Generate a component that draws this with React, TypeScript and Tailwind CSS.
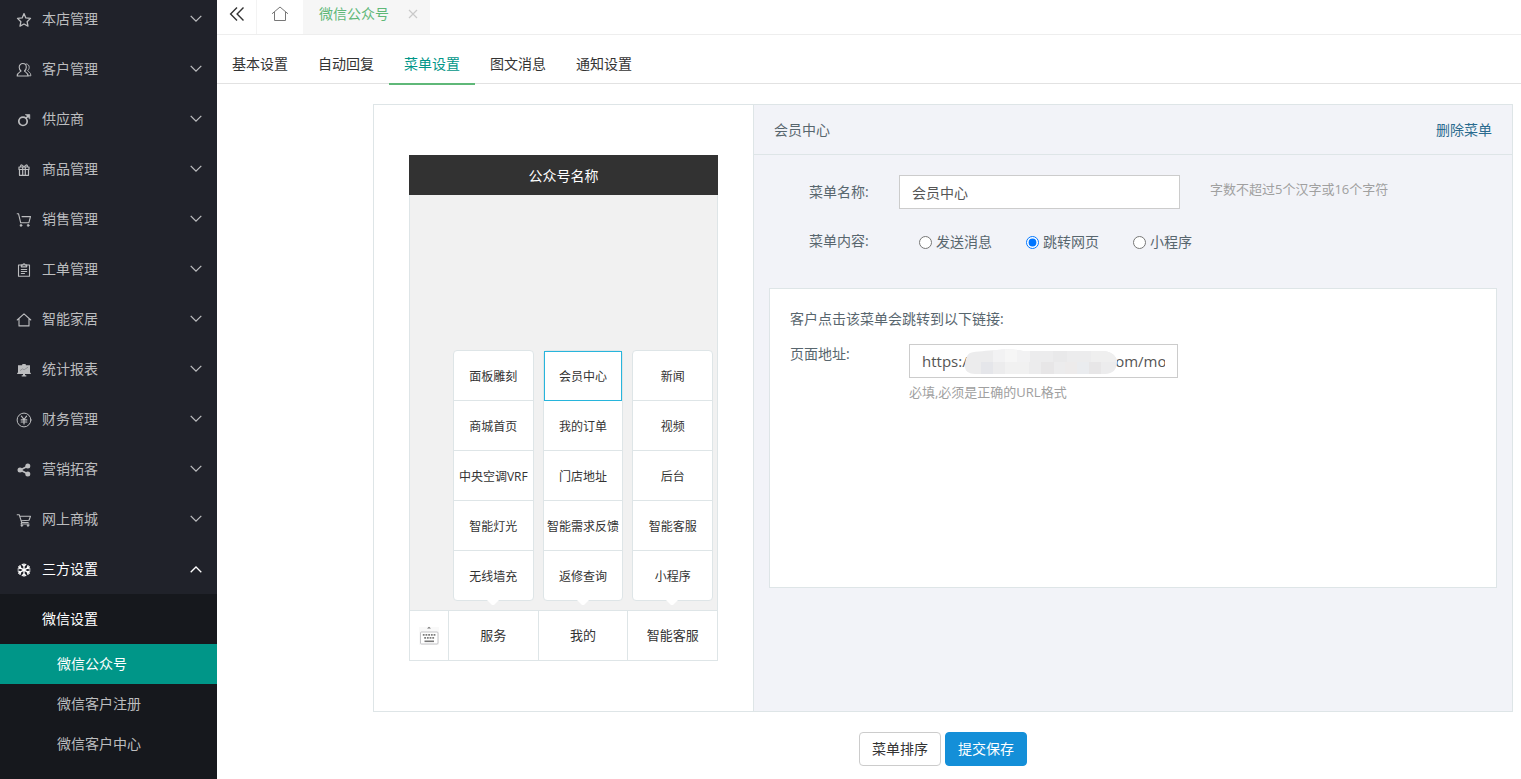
import { useState, type ReactNode } from "react";

/* ---------- icons (16 x 16 grid) ---------- */

function Icon({ children }: { children: ReactNode }) {
  return (
    <svg
      viewBox="0 0 16 16"
      className="mt-px h-4 w-4 shrink-0"
      fill="none"
      stroke="currentColor"
      strokeWidth="1.1"
      strokeLinecap="round"
      strokeLinejoin="round"
      aria-hidden="true"
    >
      {children}
    </svg>
  );
}

const StarIcon = () => (
  <Icon>
    <path strokeWidth="1.3" d="M8 1.600 9.800 5.900l4.700.5-3.400 3.300.9 4.400L8 12l-4 2.100.9-4.400L1.500 6.400l4.700-.5z" />
  </Icon>
);

const UsersIcon = () => (
  <Icon>
    <path d="M6.800 1.500c2.100 0 3.500 1.600 3.500 3.700 0 1.700-.8 2.900-1.800 3.800.4 1 3.500 1.300 3.500 5H1.200c0-3.700 3.400-4 3.800-5-1-.9-1.800-2.100-1.800-3.800 0-2.100 1.500-3.700 3.600-3.700z" />
    <path strokeWidth=".9" d="M10.300 1.900c1.900.2 2.900 1.600 2.900 3.400 0 1.500-.7 2.600-1.500 3.300.4 1.300 3.200 1.600 3.200 5.200h-2.600" />
  </Icon>
);

const MaleIcon = () => (
  <Icon>
    <circle cx="7" cy="9.300" r="4.200" strokeWidth="1.700" />
    <path strokeWidth="1.500" d="m10 6.200 2.600-2.700" />
    <path d="M9.600 2.500h4.200v4.200z" fill="currentColor" strokeWidth=".6" />
  </Icon>
);

const GiftIcon = () => (
  <Icon>
    <path
      strokeWidth="1.200"
      d="M3 5h10v2.500H3zM3.500 7.500h9v5.800h-9zM6.700 5v8.300M9.300 5v8.300M7.500 4.700C6.500 2.400 4.300 2.500 4.700 4.400M8.500 4.700c1-2.300 3.200-2.200 2.800-.3"
    />
  </Icon>
);

const CartIcon = () => (
  <Icon>
    <path d="M1.200 1.700h1.300l2.200 9.100h8.100l1.700-6.200H6" />
    <circle cx="5" cy="13.400" r="1.100" fill="currentColor" strokeWidth=".4" />
    <circle cx="12.200" cy="13.400" r="1.100" fill="currentColor" strokeWidth=".4" />
  </Icon>
);

const ClipboardIcon = () => (
  <Icon>
    <path d="M5 3H2.500v11.200h11V3H11" />
    <path strokeWidth="1.300" d="M5.400 4.800V3H7c0-1.600 2-1.600 2 0h1.600v1.800z" />
    <path d="M5.300 7.500h5.400M5.300 9.500h5.400M5.300 11.500h3.200" />
  </Icon>
);

const HouseIcon = () => (
  <Icon>
    <path d="M1.200 8 8 1.900 14.800 8M3 6.800v7.100h10V6.800" />
  </Icon>
);

const BoardIcon = () => (
  <Icon>
    <path
      fill="currentColor"
      stroke="none"
      d="M6.500 2h3l.5 1.200h4v7.600h.8v1.200H9v1.200h1.300v1.200H5.700v-1.200H7V12H1.200v-1.200H2V3.200h4z"
    />
    <path className="stroke-[#85878c]" strokeWidth=".8" d="m4.400 8.400 2-1.500 1.800.8 3.500-2.300" />
  </Icon>
);

const YenIcon = () => (
  <Icon>
    <circle cx="8" cy="8" r="6.900" strokeWidth="1" />
    <path strokeWidth="1.200" d="M5.400 4.200 8 7.500l2.600-3.300M8 7.500v4.500M5.200 7.900h5.600M5.200 10h5.600" />
  </Icon>
);

const ShareIcon = () => (
  <Icon>
    <path strokeWidth="1.500" d="M12 4 4.300 8l7.700 4" />
    <g fill="currentColor" stroke="none">
      <circle cx="4" cy="8" r="2.500" />
      <circle cx="11.800" cy="4.100" r="2.500" />
      <circle cx="11.800" cy="11.900" r="2.500" />
    </g>
  </Icon>
);

const StoreCartIcon = () => (
  <Icon>
    <path d="M1.200 2.700h2l2.500 7.800h6.500M3.700 4.200h10.800l-1.500 4-7.600.5M5.700 10.500l-.6 1.500h8" />
    <circle cx="5.800" cy="13.500" r="1" fill="currentColor" strokeWidth=".4" />
    <circle cx="12" cy="13.500" r="1" fill="currentColor" strokeWidth=".4" />
  </Icon>
);

const SnowIcon = () => (
  <Icon>
    <path
      strokeWidth="1.300"
      d="M8 1.800v12.400M2.600 4.900l10.800 6.200M2.600 11.100l10.800-6.200M6.200 2.400 8 4.200l1.800-1.800M6.200 13.600 8 11.800l1.800 1.800M2.100 7l2.500-.8L4 3.600M13.900 7l-2.500-.8.600-2.600M2.100 9l2.500.8-.6 2.600M13.900 9l-2.500.8.600 2.600"
    />
  </Icon>
);

function Chevron({ up = false }: { up?: boolean }) {
  return (
    <svg
      viewBox="0 0 14 14"
      className="h-3.5 w-3.5 shrink-0"
      fill="none"
      stroke="currentColor"
      strokeWidth="1.300"
      aria-hidden="true"
    >
      <path d={up ? "m1.700 10.300 5.300-5.300 5.300 5.300" : "m1.700 3.900 5.300 5.200 5.300-5.200"} />
    </svg>
  );
}

function KeyboardIcon() {
  return (
    <svg viewBox="0 0 20 20" className="h-5 w-5" aria-hidden="true">
      <path d="M0 1h20v18H0z" fill="#f9f9f9" />
      <path d="m8 2.500 2-1.800 2 1.800z" fill="#777" />
      <rect x="1.500" y="6" width="17.500" height="12" rx="1" fill="#fff" stroke="#c3c3c6" />
      <g stroke="#7d7d7d" strokeWidth="1.900" strokeDasharray="1.800 .9">
        <path d="M3.800 8.900h13.300M5.200 11.900h10.300" />
      </g>
      <path d="M5.500 15.300h9.500" stroke="#777" strokeWidth="1.600" />
    </svg>
  );
}

/* ---------- sidebar ---------- */

const NAV = [
  { label: "本店管理", icon: <StarIcon /> },
  { label: "客户管理", icon: <UsersIcon /> },
  { label: "供应商", icon: <MaleIcon /> },
  { label: "商品管理", icon: <GiftIcon /> },
  { label: "销售管理", icon: <CartIcon /> },
  { label: "工单管理", icon: <ClipboardIcon /> },
  { label: "智能家居", icon: <HouseIcon /> },
  { label: "统计报表", icon: <BoardIcon /> },
  { label: "财务管理", icon: <YenIcon /> },
  { label: "营销拓客", icon: <ShareIcon /> },
  { label: "网上商城", icon: <StoreCartIcon /> },
  { label: "三方设置", icon: <SnowIcon />, open: true },
];

const SUB_NAV = ["微信公众号", "微信客户注册", "微信客户中心"];

function Sidebar() {
  return (
    <aside className="flex w-[217px] shrink-0 flex-col overflow-hidden bg-[#20222a] text-[#bcbdbf]">
      <nav className="-mt-1.5 flex flex-1 flex-col">
        {NAV.map((item) => (
          <button
            key={item.label}
            type="button"
            aria-expanded={!!item.open}
            className={`flex h-[50px] shrink-0 items-center pr-3.5 pl-4 ${item.open ? "text-white" : ""}`}
          >
            {item.icon}
            <span className="ml-2.5 flex-1 text-left">{item.label}</span>
            <Chevron up={item.open} />
          </button>
        ))}
        <div className="flex-1 bg-[#16181d]">
          <a href="#wechat" className="flex h-[50px] items-center pl-[42px] text-white">
            微信设置
          </a>
          {SUB_NAV.map((label, i) => (
            <a
              key={label}
              href="#wechat-page"
              className={`flex h-10 items-center pl-[57px] ${i === 0 ? "bg-[#009688] text-white" : ""}`}
            >
              {label}
            </a>
          ))}
        </div>
      </nav>
    </aside>
  );
}

/* ---------- top bars ---------- */

function TopBar() {
  return (
    <header className="flex h-[35px] border-b border-[#eeeeee] text-[#333333]">
      <button type="button" aria-label="收起" className="flex w-10 items-center justify-center border-r border-[#f3f3f3] pb-1.5">
        <svg viewBox="0 0 16 16" className="h-4 w-4" fill="none" stroke="currentColor" strokeWidth="1.400" aria-hidden="true">
          <path d="M8 1.500 1.600 8 8 14.500M14.500 1.500 8.100 8l6.400 6.500" />
        </svg>
      </button>
      <button type="button" aria-label="首页" className="flex w-[46px] items-center justify-center pb-1.5 text-[#777777]">
        <svg viewBox="0 0 18 18" className="h-[18px] w-[18px]" fill="none" stroke="currentColor" aria-hidden="true">
          <path d="M1 8.800 9 2l8 6.800M3.500 7v8.500h11V7" />
        </svg>
      </button>
      <div className="flex items-center bg-[#f6f6f6] pr-3 pb-1.5 pl-4 text-[#5fb878]">
        <a href="#wechat-page">微信公众号</a>
        <button type="button" aria-label="关闭" className="ml-[19px] text-[#c9c9c9]">
          <svg viewBox="0 0 10 10" className="h-2.5 w-2.5" fill="none" stroke="currentColor" strokeWidth="1.200" aria-hidden="true">
            <path d="m1 1 8 8M9 1 1 9" />
          </svg>
        </button>
      </div>
    </header>
  );
}

const TABS = ["基本设置", "自动回复", "菜单设置", "图文消息", "通知设置"];

function Tabs() {
  return (
    <nav className="flex h-[49px] items-end border-b border-[#e2e2e2] text-[#333333]">
      {TABS.map((tab) => (
        <a
          key={tab}
          href="#tab"
          className={`-mb-0.5 flex h-10 items-center border-b-2 px-[15px] ${
            tab === "菜单设置" ? "border-[#5fb878] text-[#009688]" : "border-transparent"
          }`}
        >
          {tab}
        </a>
      ))}
    </nav>
  );
}

/* ---------- phone preview ---------- */

const COLUMNS = [
  { title: "服务", items: ["面板雕刻", "商城首页", "中央空调VRF", "智能灯光", "无线墙充"] },
  { title: "我的", items: ["会员中心", "我的订单", "门店地址", "智能需求反馈", "返修查询"] },
  { title: "智能客服", items: ["新闻", "视频", "后台", "智能客服", "小程序"] },
];

function Phone() {
  return (
    <div className="text-[#333333]">
      <h2 className="flex h-10 items-center justify-center bg-[#323232] pt-0.5 text-white">公众号名称</h2>
      <div className="border-x border-b border-[#dee5e7]">
        <div className="flex h-[415px] items-end bg-[#f1f1f1] pb-[9px] pl-[38px]">
          {COLUMNS.map((col) => (
            <div key={col.title} className="relative flex-1 pr-1 pl-[5px] text-xs">
              <ul className="rounded border border-[#dee5e7] bg-white">
                {col.items.map((item) => (
                  <li
                    key={item}
                    className={`flex h-[50px] items-center justify-center pt-0.5 whitespace-nowrap last:h-[49px] last:border-b-0 ${
                      item === "会员中心" ? "border border-[#27b5dc]" : "border-b border-[#dee5e7]"
                    }`}
                  >
                    <button type="button">{item}</button>
                  </li>
                ))}
              </ul>
              <svg viewBox="0 0 12 5" className="absolute -bottom-1 left-1/2 h-[5px] w-3 -translate-x-1/2" aria-hidden="true">
                <path d="M0 0h12L7 5H5z" fill="#fff" />
              </svg>
            </div>
          ))}
        </div>
        <div className="flex h-[50px] border-t border-[#dee5e7] bg-white">
          <div className="flex w-[38px] items-center justify-center">
            <KeyboardIcon />
          </div>
          {COLUMNS.map((col) => (
            <button key={col.title} type="button" className="flex-1 border-l border-[#dee5e7] text-[13px]">
              {col.title}
            </button>
          ))}
        </div>
      </div>
    </div>
  );
}

/* ---------- form ---------- */

const KINDS = ["发送消息", "跳转网页", "小程序"];
const LINK = "https:/" + "\u2003".repeat(9) + "\u2002\u2004" + "om/mo";

function MaskedPatch() {
  return (
    <svg
      viewBox="0 0 152 25"
      className="absolute top-[5px] left-[56px] h-[25px] w-[152px]"
      aria-hidden="true"
    >
      <defs>
        <clipPath id="patch">
          <path d="M0 18C0 13 1 6 5 4 12 2 22 2 32 1c8-1 18-1 26 1h80c8 0 14 5 14 11 0 7-4 12-12 12H10C4 25 0 22 0 18z" />
        </clipPath>
      </defs>
      <g clipPath="url(#patch)" shapeRendering="crispEdges">
        <path fill="#ececed" d="M0 0h152v25H0z" />
        <path fill="#f2f2f3" d="M28 0h12v13H28zM52 0h13v13H52z" />
        <path fill="#f6f6f6" d="M40 0h12v13H40z" />
        <path fill="#e5e6ea" d="M16 13h12v12H16z" />
        <path fill="#f1f1f1" d="M40 13h24v12H40z" />
        <path fill="#e7e6e7" d="M76 13h13v12H76zM124 13h12v12h-12z" />
        <path fill="#eaecef" d="M112 13h12v12h-12z" />
        <path fill="#efefef" d="M126 0h26v13h-26z" />
        <path fill="#e9e9ea" d="M88 0h14v13H88z" />
        <path fill="#edebeb" d="M100 13h12v12h-12z" />
      </g>
    </svg>
  );
}

function MenuForm() {
  const [name, setName] = useState("会员中心");
  const [kind, setKind] = useState("跳转网页");
  const [link, setLink] = useState(LINK);

  return (
    <section className="min-w-0 flex-1 border-l border-[#dee5e7] bg-[#f2f3f8]">
      <div className="flex h-[50px] items-center justify-between border-b border-[#dee5e7] px-5">
        <h2>会员中心</h2>
        <a href="#delete" className="text-[#2a6b8f]">
          删除菜单
        </a>
      </div>

      <div className="flex pt-5 pl-[55px]">
        <label htmlFor="menu-name" className="w-[90px] leading-[34px]">
          菜单名称:
        </label>
        <input
          id="menu-name"
          value={name}
          onChange={(e) => setName(e.target.value)}
          className="h-[34px] w-[281px] border border-[#cccccc] bg-white px-3 text-[#555555] outline-none"
        />
        <span className="ml-[30px] text-[13px] leading-7 text-[#a0a0a0]">字数不超过5个汉字或16个字符</span>
      </div>

      <fieldset className="pt-[22px] pl-[55px]">
        <legend className="float-left w-[110px] leading-5">菜单内容:</legend>
        <div className="flex gap-[34px]">
          {KINDS.map((k) => (
            <label key={k} className="flex items-center gap-1 leading-[22px]">
              <input type="radio" name="kind" checked={kind === k} onChange={() => setKind(k)} className="h-[13px] w-[13px]" />
              {k}
            </label>
          ))}
        </div>
      </fieldset>

      <div className="mx-[15px] mt-[35px] h-[300px] border border-[#dee5e7] bg-white px-5 pt-5">
        <p className="leading-5">客户点击该菜单会跳转到以下链接:</p>
        <div className="mt-[15px] flex">
          <label htmlFor="menu-link" className="w-[119px] leading-5">
            页面地址:
          </label>
          <div>
            <div className="relative">
              <input
                id="menu-link"
                value={link}
                onChange={(e) => setLink(e.target.value)}
                className="block h-[34px] w-[269px] border border-[#cccccc] bg-white px-3 text-[15px] text-[#555555] outline-none"
              />
              <MaskedPatch />
            </div>
            <p className="mt-1 text-[13px] leading-5 text-[#a0a0a0]">必填,必须是正确的URL格式</p>
          </div>
        </div>
      </div>
    </section>
  );
}

export default function App() {
  return (
    <div className="flex min-h-screen bg-white font-['Open_Sans','Noto_Sans_CJK_SC',sans-serif] text-sm">
      <Sidebar />
      <div className="min-w-0 flex-1">
        <TopBar />
        <Tabs />
        <main className="mt-5 mr-2 ml-[156px] text-[#58666e]">
          <div className="flex border border-[#dee5e7]">
            <div className="w-[379px] shrink-0 px-[35px] py-[50px]">
              <Phone />
            </div>
            <MenuForm />
          </div>
          <div className="flex justify-center gap-1 pt-5 pb-3">
            <button type="button" className="h-[34px] rounded border border-[#cccccc] bg-white px-3 text-[#333333]">
              菜单排序
            </button>
            <button type="button" className="h-[34px] rounded border border-[#148fd8] bg-[#148fd8] px-3 text-white">
              提交保存
            </button>
          </div>
        </main>
      </div>
    </div>
  );
}
